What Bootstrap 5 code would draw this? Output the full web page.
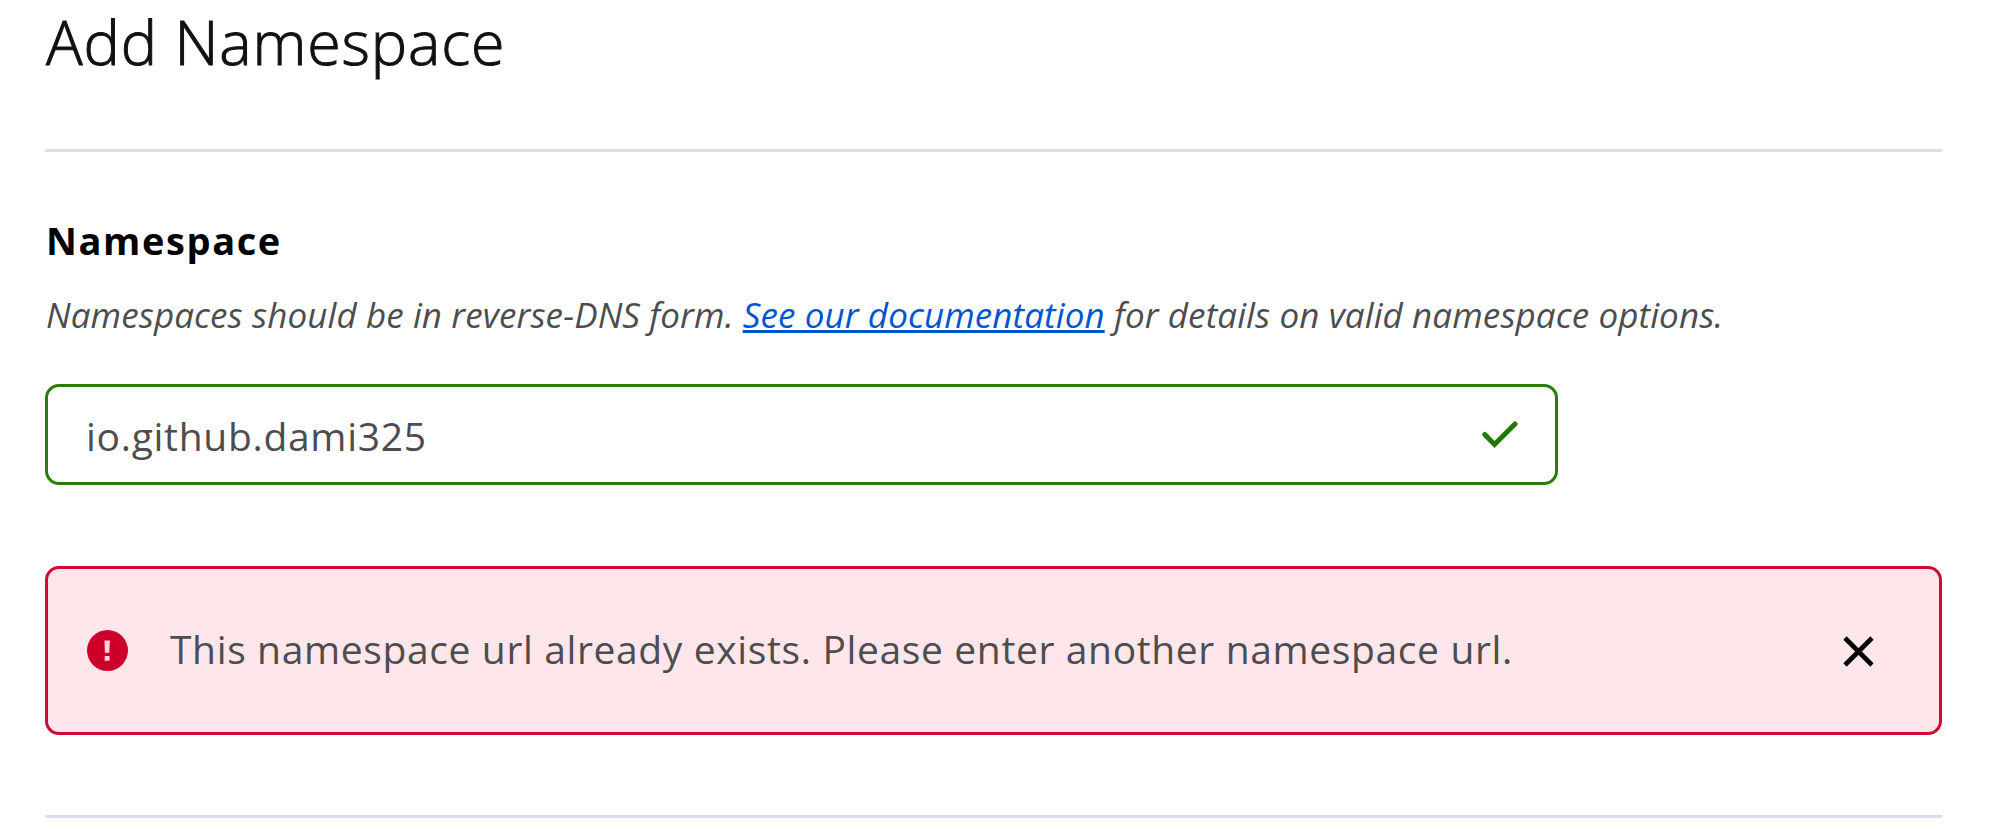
<!DOCTYPE html>
<html lang="en">
<head>
    <meta charset="UTF-8" />
    <meta name="viewport" content="width=device-width, initial-scale=1" />
    <title>Add Namespace</title>

    <!-- Bootstrap 5 CSS -->
    <link href="https://cdn.jsdelivr.net/npm/bootstrap@5.3.0/dist/css/bootstrap.min.css" rel="stylesheet">

    <style>
        body {
            background-color: #fff;
            color: #4c4d4f;
            font-family: 'Open Sans', 'Noto Sans', sans-serif;
            overflow: hidden;
        }
        .page {
            padding: 0 58px 0 45px;
        }
        .page-title {
            color: #111;
            font-size: 61px;
            font-weight: 300;
            letter-spacing: .85px;
            line-height: 84px;
            height: 149px;
            padding-left: 1px;
            -webkit-text-stroke: 1px #111;
        }
        .divider {
            border-top: 3px solid #dcdef0;
            opacity: 1;
        }
        .ns-label {
            color: #000;
            font-size: 38px;
            font-weight: 700;
            letter-spacing: 1.6px;
            line-height: 52px;
            margin-top: 62px;
            padding-left: 1px;
        }
        .ns-hint {
            font-size: 35px;
            font-style: italic;
            letter-spacing: .095px;
            line-height: 48px;
            margin-top: 25px;
            padding-left: 1px;
            white-space: nowrap;
        }
        .ns-hint a {
            color: #0054d1;
        }
        .ns-field {
            width: 1513px;
            height: 101px;
            margin-top: 45px;
            padding: 0 37px 0 38px;
            border: 3px solid #2c7c0c;
            border-radius: 14px;
        }
        .ns-field .form-control {
            color: #4c4d4f;
            font-size: 39px;
            letter-spacing: .7px;
            line-height: 54px;
            margin-top: 2px;
        }
        .ns-alert {
            height: 169px;
            margin-top: 81px;
            padding: 0 65px 0 39px;
            color: #4c4d4f;
            background-color: #ffe6ea;
            border: 3px solid #cf0a35;
            border-radius: 14px;
            font-size: 39px;
            letter-spacing: .63px;
            white-space: nowrap;
        }
        .ns-alert .message {
            margin-left: 42px;
            padding-bottom: 3px;
        }
        .ns-alert .btn {
            margin-top: 2px;
        }
        .end-divider {
            margin: 80px 0 0;
        }
    </style>
</head>
<body>

<div class="page">
    <h1 class="page-title m-0">Add Namespace</h1>
    <hr class="divider m-0">

    <form>
        <label class="ns-label d-block" for="namespace">Namespace</label>
        <p class="ns-hint mb-0">Namespaces should be in reverse-DNS form. <a href="#">See our documentation</a> for details on valid namespace options.</p>

        <div class="ns-field d-flex align-items-center">
            <input type="text" class="form-control border-0 p-0 shadow-none" id="namespace" value="io.github.dami325" spellcheck="false">
            <!-- Valid check mark -->
            <svg class="flex-shrink-0" width="36" height="28" viewBox="0 0 36 28" fill="none" stroke="#237804" stroke-width="5" stroke-linecap="round">
                <path d="M2.8 13.5 12.5 23.5 33 3" />
            </svg>
        </div>

        <div class="ns-alert alert d-flex align-items-center mb-0" role="alert">
            <svg class="flex-shrink-0" width="41" height="41" viewBox="0 0 41 41">
                <circle cx="20.5" cy="20.5" r="20.5" fill="#cc0029" />
                <path d="M17.5 10.5h5.4l-.6 12.2h-4.4zM17.7 26h4.8v4.8h-4.8z" fill="#ffd5dc" />
            </svg>
            <span class="message">This namespace url already exists. Please enter another namespace url.</span>
            <button type="button" class="btn border-0 p-0 ms-auto d-flex" aria-label="Close" data-bs-dismiss="alert">
                <svg width="31" height="31" viewBox="0 0 31 31" fill="none" stroke="#000" stroke-width="4.6">
                    <path d="M2 2 29 29M29 2 2 29" />
                </svg>
            </button>
        </div>
    </form>

    <hr class="divider end-divider">
</div>

<!-- Bootstrap 5 JS Bundle -->
<script src="https://cdn.jsdelivr.net/npm/bootstrap@5.3.0/dist/js/bootstrap.bundle.min.js"></script>

</body>
</html>
